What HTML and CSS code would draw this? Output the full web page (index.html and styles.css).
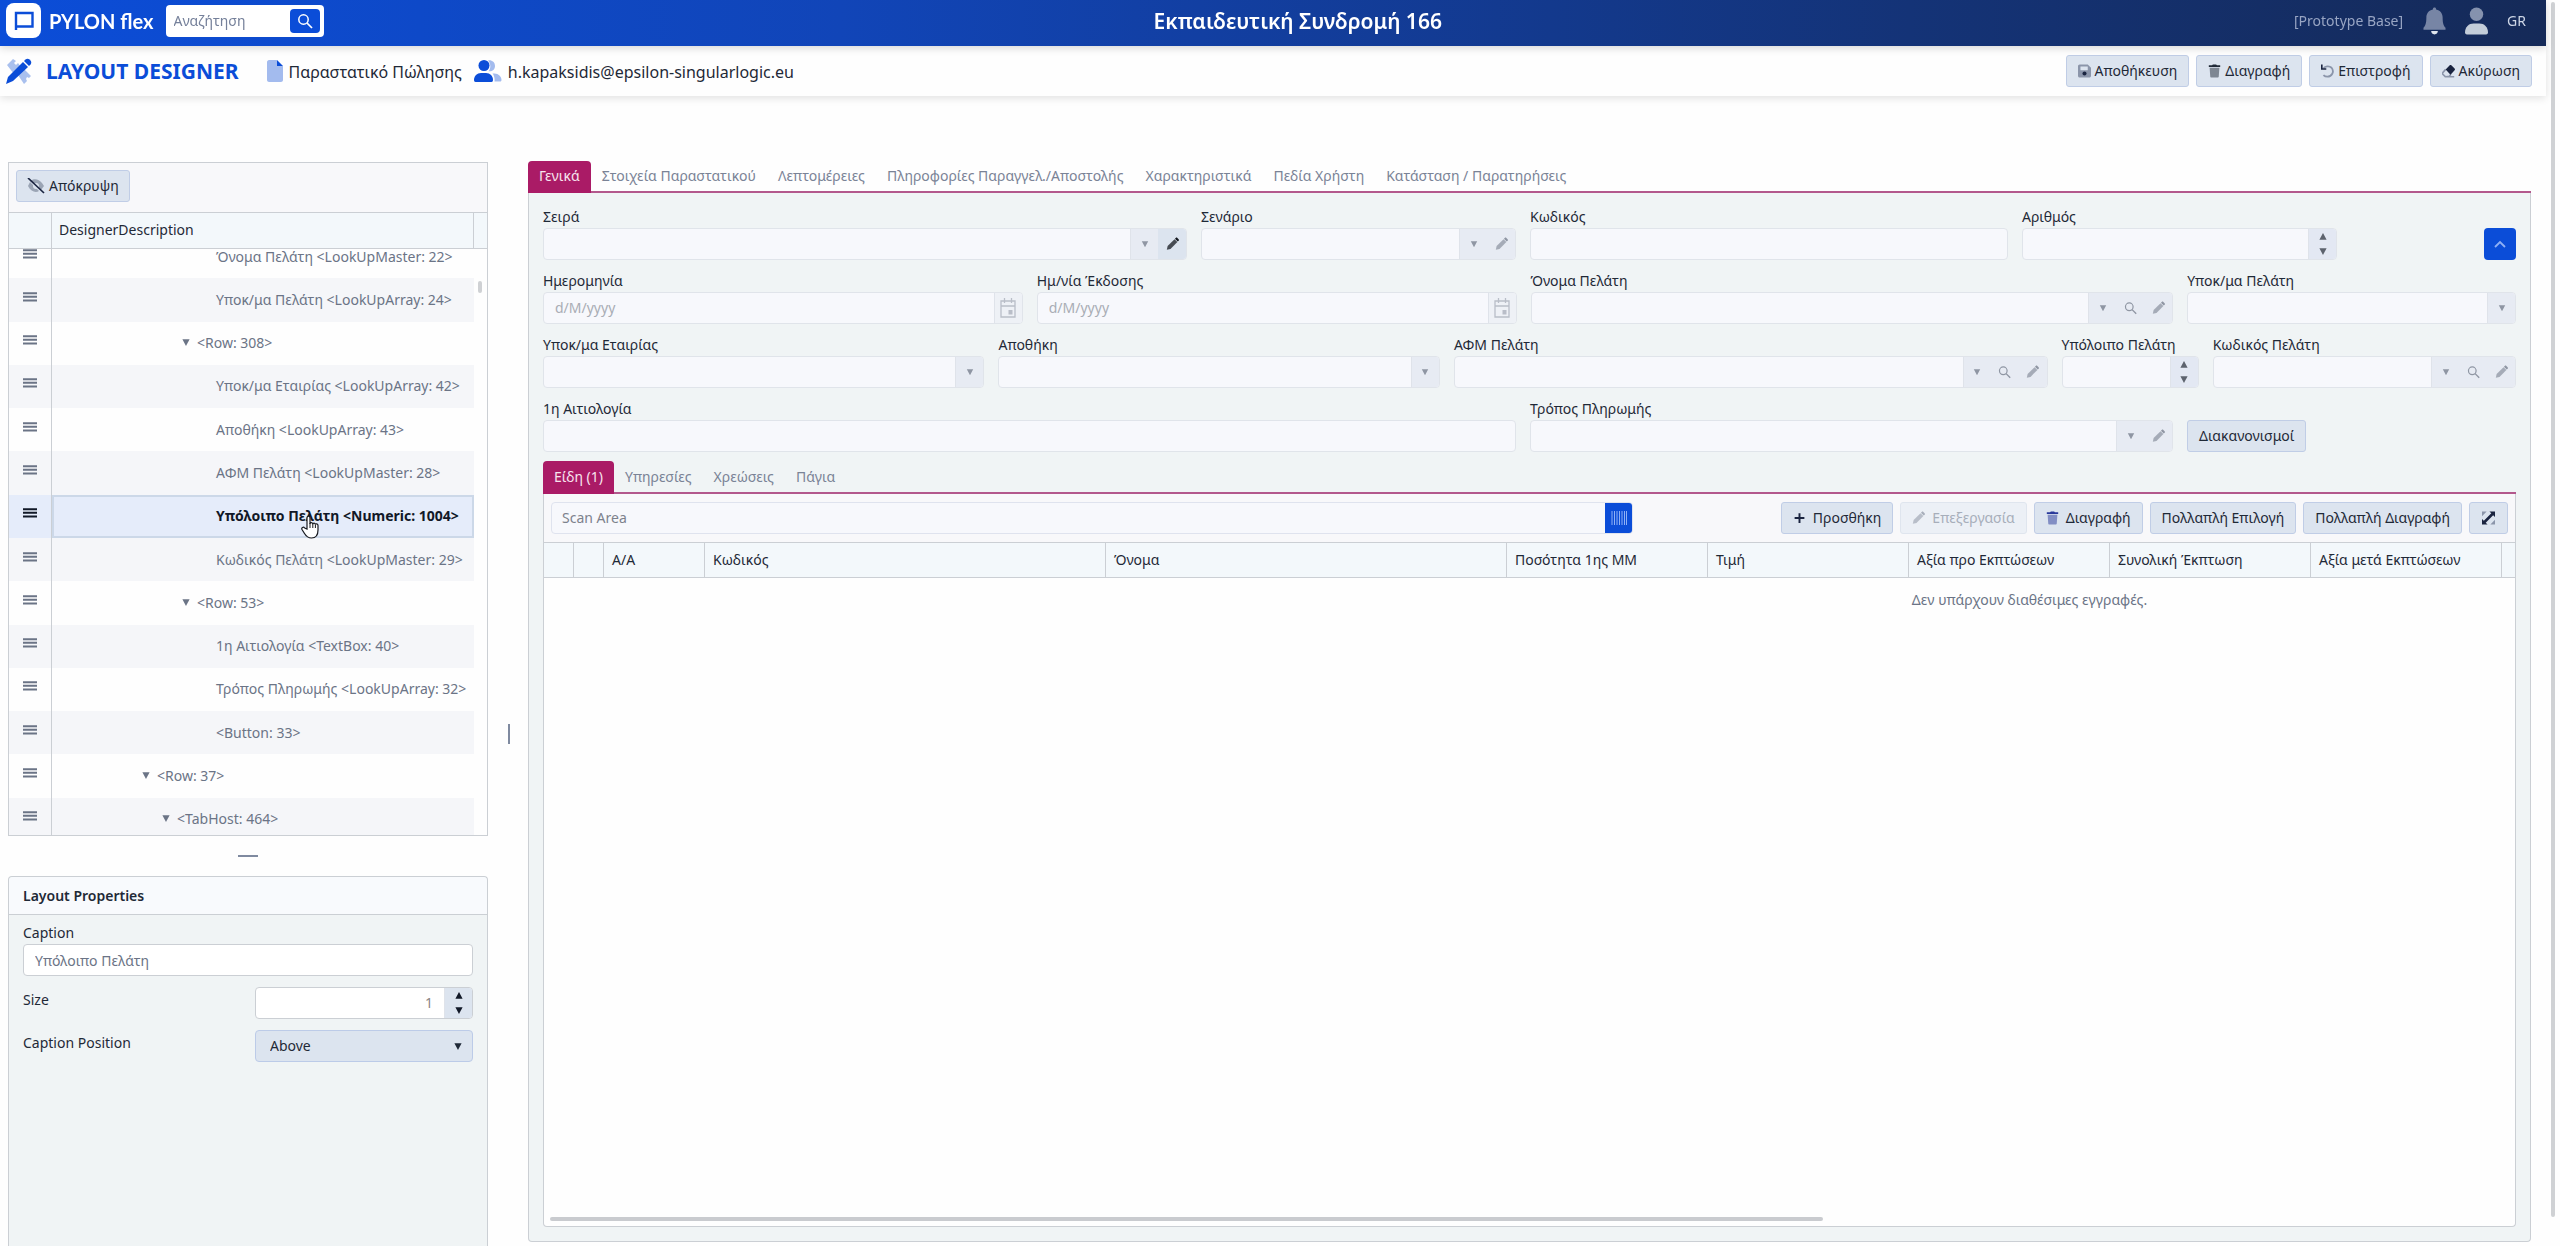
FILE: index.html
```html
<!DOCTYPE html>
<html lang="el">
<head>
    <meta charset="UTF-8">
    <meta name="viewport" content="width=device-width, initial-scale=1.0">
    <title>PYLON flex - Layout Designer</title>
    <link rel="stylesheet" href="styles.css">
</head>
<body>

    <svg class="sprite" aria-hidden="true">
        <symbol id="i-search" viewBox="0 0 16 16"><circle cx="6.5" cy="6.5" r="4.7" fill="none" stroke="currentColor" stroke-width="1.5"/><path d="M10 10l5 5" stroke="currentColor" stroke-width="1.7"/></symbol>
        <symbol id="i-pencil" viewBox="0 0 16 16"><path d="M1 15l1-4.5 8.5-8.5 3.500 3.500L5.500 14z" fill="currentColor" opacity=".75"/><path d="M11 1.500l1-1c.6-.6 1.400-.6 2 0l1.500 1.500c.6.6.6 1.400 0 2l-1 1z" fill="currentColor"/></symbol>
        <symbol id="i-down" viewBox="0 0 10 10"><path d="M1 1.500h8L5 9z" fill="currentColor"/></symbol>
        <symbol id="i-up" viewBox="0 0 10 10"><path d="M1 8.500h8L5 1z" fill="currentColor"/></symbol>
        <symbol id="i-calendar" viewBox="0 0 16 20"><path d="M1 3h14v16H1zM1 8h14M4.500 0v5M11.500 0v5" fill="none" stroke="currentColor" stroke-width="1.3"/><path d="M8.500 12h4v4.500h-4z" fill="currentColor"/></symbol>
        <symbol id="i-trash" viewBox="0 0 16 16"><path d="M1 1h4l1-1h4l1 1h4v2.200H1z" fill="currentColor"/><path d="M2 4h12l-.8 11c0 .6-.5 1-1 1H3.800c-.6 0-1-.4-1-1z" fill="currentColor" opacity=".5"/></symbol>
        <symbol id="i-menu" viewBox="0 0 14 10"><path d="M0 1.200h14M0 4.800h14M0 8.400h14" stroke="currentColor" stroke-width="2"/></symbol>
    </svg>

    <header class="topbar">
        <a class="brand" href="#" aria-label="PYLON flex">
            <svg class="brand-logo" viewBox="0 0 36 36"><rect width="35" height="35" rx="8" fill="#fff"/><path d="M10 27V10h16.500v13.500H10" fill="none" stroke="#0b4dd8" stroke-width="2.400"/></svg>
            <span>PYLON flex</span>
        </a>
        <div class="search">
            <input type="text" placeholder="Αναζήτηση" aria-label="Αναζήτηση">
            <button type="button" aria-label="Εύρεση"><svg><use href="#i-search"/></svg></button>
        </div>
        <h1>Εκπαιδευτική Συνδρομή 166</h1>
        <span class="base">[Prototype Base]</span>
        <svg class="bell" viewBox="0 0 24 28"><path d="M12 0c1 0 1.700.7 1.700 2 4.300.9 6.800 4 6.800 8.500 0 5.500.8 8 3 10.500v2H.5v-2c2.200-2.500 3-5 3-10.500C3.500 6 6 2.900 10.300 2c0-1.300.7-2 1.700-2z" fill="#7785a5"/><path d="M8.500 24.500h7c0 2-1.500 3.500-3.500 3.500s-3.500-1.500-3.500-3.500z" fill="#dfe5ee"/></svg>
        <svg class="avatar" viewBox="0 0 24 28"><circle cx="12" cy="7" r="7" fill="#8592ae"/><path d="M0 26c0-6 4-9.500 9-9.500h6c5 0 9 3.500 9 9.500 0 1-.8 2-2 2H2c-1.200 0-2-1-2-2z" fill="#c3cdd9"/></svg>
        <a class="lang" href="#">GR</a>
    </header>

    <div class="titlebar">
        <svg class="ico-design" viewBox="0 0 26 26"><path d="M1 7l6-6 3 2-2 2 2 2 2-2 3 4-7 7zM12 17l6-6 7 7-2 2-2-1-1 2 1 2-3 3z" fill="#a9c0ee"/><path d="M2 19L17 4l5 5L7 23l-7 3z" fill="#0b4dd8"/><path d="M18 3l1.500-1.500c1-1 3-1 4 0l1 1c1 1 1 3 0 4L23 8z" fill="#0b4dd8"/></svg>
        <h2>LAYOUT DESIGNER</h2>
        <svg class="ico-doc" viewBox="0 0 16 22"><path d="M2 0h8v6h6v14c0 1-1 2-2 2H2c-1 0-2-1-2-2V2C0 1 1 0 2 0z" fill="#a3bbee"/><path d="M10 0l6 6h-6z" fill="#0b4dd8"/></svg>
        <span class="crumb">Παραστατικό Πώλησης</span>
        <svg class="ico-users" viewBox="0 0 28 22"><path d="M14 .5c3.500-.8 7 1.500 7 5.500s-3.500 6-6.500 5.200c2.500-3 2.500-7.500-.5-10.700zM18.500 13.500h2c4 0 7 3 7 6.500 0 .8-.5 1.500-1.500 1.500h-5.500c.4-3-.3-6-2-8z" fill="#a3bbee"/><circle cx="10" cy="5.500" r="5.500" fill="#0b4dd8"/><path d="M0 20c0-4 3-7 7-7h5c4 0 7 3 7 7 0 1-.6 2-1.500 2h-16C.6 22 0 21 0 20z" fill="#0b4dd8"/></svg>
        <span class="crumb">h.kapaksidis@epsilon-singularlogic.eu</span>
        <div class="actions">
            <button type="button" class="btn"><svg viewBox="0 0 16 16"><path d="M2 0h10l4 4v10c0 1-1 2-2 2H2c-1 0-2-1-2-2V2C0 1 1 0 2 0zm1 2.500V7h9V2.500z" fill="#8b95aa" fill-rule="evenodd"/><circle cx="8" cy="11" r="2.500" fill="#1a2440"/></svg>Αποθήκευση</button>
            <button type="button" class="btn"><svg><use href="#i-trash"/></svg>Διαγραφή</button>
            <button type="button" class="btn"><svg viewBox="0 0 16 16"><path d="M3 5C5 2 10 1 13 4c4 5 0 11-5 11-2 0-4-1-5-2" fill="none" stroke="#8b95aa" stroke-width="2.200"/><path d="M0 0h2v4.500h4.500v2H0z" fill="#1a2440"/></svg>Επιστροφή</button>
            <button type="button" class="btn"><svg viewBox="0 0 16 16"><path d="M4.500 6L1 10c-.6.6-.6 1.400 0 2l3 3h11M4.500 15l4.500-.5 2-2.500" fill="none" stroke="#8b95aa" stroke-width="2"/><path d="M4.500 6L9.500 1c.6-.6 1.400-.6 2 0l4 4c.6.6.6 1.400 0 2l-5 5.500z" fill="#1a2440"/></svg>Ακύρωση</button>
        </div>
    </div>

    <main class="workspace">
        <aside class="side">
            <section class="tree">
                <div class="tree-toolbar">
                    <button type="button" class="btn"><svg viewBox="0 0 18 16"><path d="M3 3c4-3 9-2 12 2l2 3-3 4M1 8c3 6 8 7 11 5L3 4z" fill="#9ba5b5"/><circle cx="9" cy="8" r="3" fill="#dce4ef"/><path d="M1 0l16 15" stroke="#1a2440" stroke-width="1.700"/></svg>Απόκρυψη</button>
                </div>
                <div class="tree-head"><span></span><span>DesignerDescription</span><span></span></div>
                <div class="tree-body">
                    <table>
                        <tr><td><svg><use href="#i-menu"/></svg></td><td class="l4">Όνομα Πελάτη &lt;LookUpMaster: 22&gt;</td></tr>
                        <tr><td><svg><use href="#i-menu"/></svg></td><td class="l4">Υποκ/μα Πελάτη &lt;LookUpArray: 24&gt;</td></tr>
                        <tr><td><svg><use href="#i-menu"/></svg></td><td class="l3"><svg><use href="#i-down"/></svg>&lt;Row: 308&gt;</td></tr>
                        <tr><td><svg><use href="#i-menu"/></svg></td><td class="l4">Υποκ/μα Εταιρίας &lt;LookUpArray: 42&gt;</td></tr>
                        <tr><td><svg><use href="#i-menu"/></svg></td><td class="l4">Αποθήκη &lt;LookUpArray: 43&gt;</td></tr>
                        <tr><td><svg><use href="#i-menu"/></svg></td><td class="l4">ΑΦΜ Πελάτη &lt;LookUpMaster: 28&gt;</td></tr>
                        <tr class="selected"><td><svg><use href="#i-menu"/></svg></td><td class="l4">Υπόλοιπο Πελάτη &lt;Numeric: 1004&gt;<svg class="pointer" viewBox="0 0 18 24"><path d="M6 14V3c0-2.500 3-2.500 3 0v6c0-2 2.800-2 2.800.3 0-1.600 2.600-1.500 2.600.5 0-1.500 2.600-1.300 2.600.7V15c0 5-2 8-6.500 8-4 0-5.500-2-7-4.500L1 14.500c-1-2 1.500-3 2.700-1.500z" fill="#fff" stroke="#16181d" stroke-width="1.200"/><path d="M9 8v5M11.800 9v4M14.400 10v3" stroke="#16181d"/></svg></td></tr>
                        <tr><td><svg><use href="#i-menu"/></svg></td><td class="l4">Κωδικός Πελάτη &lt;LookUpMaster: 29&gt;</td></tr>
                        <tr><td><svg><use href="#i-menu"/></svg></td><td class="l3"><svg><use href="#i-down"/></svg>&lt;Row: 53&gt;</td></tr>
                        <tr><td><svg><use href="#i-menu"/></svg></td><td class="l4">1η Αιτιολογία &lt;TextBox: 40&gt;</td></tr>
                        <tr><td><svg><use href="#i-menu"/></svg></td><td class="l4">Τρόπος Πληρωμής &lt;LookUpArray: 32&gt;</td></tr>
                        <tr><td><svg><use href="#i-menu"/></svg></td><td class="l4">&lt;Button: 33&gt;</td></tr>
                        <tr><td><svg><use href="#i-menu"/></svg></td><td class="l1"><svg><use href="#i-down"/></svg>&lt;Row: 37&gt;</td></tr>
                        <tr><td><svg><use href="#i-menu"/></svg></td><td class="l2"><svg><use href="#i-down"/></svg>&lt;TabHost: 464&gt;</td></tr>
                    </table>
                    <div class="tree-scroll"></div>
                </div>
            </section>
            <div class="split-h"></div>
            <section class="props">
                <h3>Layout Properties</h3>
                <div class="props-body">
                    <div class="field">
                        <label for="caption">Caption</label>
                        <input class="box" id="caption" type="text" value="Υπόλοιπο Πελάτη">
                    </div>
                    <label for="size">Size</label>
                    <div class="control live">
                        <input id="size" type="number" value="1">
                        <div class="spin"><button type="button" aria-label="Αύξηση"><svg><use href="#i-up"/></svg></button><button type="button" aria-label="Μείωση"><svg><use href="#i-down"/></svg></button></div>
                    </div>
                    <label for="position">Caption Position</label>
                    <div class="select">
                        <select id="position"><option>Above</option><option>Left</option></select>
                        <svg><use href="#i-down"/></svg>
                    </div>
                </div>
            </section>
        </aside>

        <div class="split-v"></div>

        <section class="designer">
            <nav class="tabs">
                <button type="button" class="active">Γενικά</button>
                <button type="button">Στοιχεία Παραστατικού</button>
                <button type="button">Λεπτομέρειες</button>
                <button type="button">Πληροφορίες Παραγγελ./Αποστολής</button>
                <button type="button">Χαρακτηριστικά</button>
                <button type="button">Πεδία Χρήστη</button>
                <button type="button">Κατάσταση / Παρατηρήσεις</button>
            </nav>
            <div class="panel">
                <div class="form-row row-1">
                    <div class="field">
                        <label for="f1">Σειρά</label>
                        <div class="control"><input id="f1" type="text"><button type="button" aria-label="Λίστα"><svg class="tri"><use href="#i-down"/></svg></button><button type="button" class="on" aria-label="Επεξεργασία"><svg><use href="#i-pencil"/></svg></button></div>
                    </div>
                    <div class="field">
                        <label for="f2">Σενάριο</label>
                        <div class="control"><input id="f2" type="text"><button type="button" aria-label="Λίστα"><svg class="tri"><use href="#i-down"/></svg></button><button type="button" aria-label="Επεξεργασία"><svg><use href="#i-pencil"/></svg></button></div>
                    </div>
                    <div class="field">
                        <label for="f3">Κωδικός</label>
                        <div class="control"><input id="f3" type="text"></div>
                    </div>
                    <div class="field">
                        <label for="f4">Αριθμός</label>
                        <div class="control"><input id="f4" type="number"><div class="spin"><button type="button" aria-label="Αύξηση"><svg><use href="#i-up"/></svg></button><button type="button" aria-label="Μείωση"><svg><use href="#i-down"/></svg></button></div></div>
                    </div>
                    <button type="button" class="collapse" aria-label="Σύμπτυξη"><svg viewBox="0 0 12 8"><path d="M1 7l5-5 5 5" fill="none" stroke="#8fb0f5" stroke-width="1.800"/></svg></button>
                </div>
                <div class="form-row row-2">
                    <div class="field">
                        <label for="f5">Ημερομηνία</label>
                        <div class="control"><input id="f5" type="text" placeholder="d/M/yyyy"><button type="button" class="date" aria-label="Ημερολόγιο"><svg class="cal"><use href="#i-calendar"/></svg></button></div>
                    </div>
                    <div class="field">
                        <label for="f6">Ημ/νία Έκδοσης</label>
                        <div class="control"><input id="f6" type="text" placeholder="d/M/yyyy"><button type="button" class="date" aria-label="Ημερολόγιο"><svg class="cal"><use href="#i-calendar"/></svg></button></div>
                    </div>
                    <div class="field">
                        <label for="f7">Όνομα Πελάτη</label>
                        <div class="control"><input id="f7" type="text"><button type="button" aria-label="Λίστα"><svg class="tri"><use href="#i-down"/></svg></button><button type="button" aria-label="Εύρεση"><svg><use href="#i-search"/></svg></button><button type="button" aria-label="Επεξεργασία"><svg><use href="#i-pencil"/></svg></button></div>
                    </div>
                    <div class="field">
                        <label for="f8">Υποκ/μα Πελάτη</label>
                        <div class="control"><input id="f8" type="text"><button type="button" aria-label="Λίστα"><svg class="tri"><use href="#i-down"/></svg></button></div>
                    </div>
                </div>
                <div class="form-row row-3">
                    <div class="field">
                        <label for="f9">Υποκ/μα Εταιρίας</label>
                        <div class="control"><input id="f9" type="text"><button type="button" aria-label="Λίστα"><svg class="tri"><use href="#i-down"/></svg></button></div>
                    </div>
                    <div class="field">
                        <label for="f10">Αποθήκη</label>
                        <div class="control"><input id="f10" type="text"><button type="button" aria-label="Λίστα"><svg class="tri"><use href="#i-down"/></svg></button></div>
                    </div>
                    <div class="field">
                        <label for="f11">ΑΦΜ Πελάτη</label>
                        <div class="control"><input id="f11" type="text"><button type="button" aria-label="Λίστα"><svg class="tri"><use href="#i-down"/></svg></button><button type="button" aria-label="Εύρεση"><svg><use href="#i-search"/></svg></button><button type="button" aria-label="Επεξεργασία"><svg><use href="#i-pencil"/></svg></button></div>
                    </div>
                    <div class="field">
                        <label for="f12">Υπόλοιπο Πελάτη</label>
                        <div class="control"><input id="f12" type="number"><div class="spin"><button type="button" aria-label="Αύξηση"><svg><use href="#i-up"/></svg></button><button type="button" aria-label="Μείωση"><svg><use href="#i-down"/></svg></button></div></div>
                    </div>
                    <div class="field">
                        <label for="f13">Κωδικός Πελάτη</label>
                        <div class="control"><input id="f13" type="text"><button type="button" aria-label="Λίστα"><svg class="tri"><use href="#i-down"/></svg></button><button type="button" aria-label="Εύρεση"><svg><use href="#i-search"/></svg></button><button type="button" aria-label="Επεξεργασία"><svg><use href="#i-pencil"/></svg></button></div>
                    </div>
                </div>
                <div class="form-row row-4">
                    <div class="field">
                        <label for="f14">1η Αιτιολογία</label>
                        <div class="control"><input id="f14" type="text"></div>
                    </div>
                    <div class="field">
                        <label for="f15">Τρόπος Πληρωμής</label>
                        <div class="control"><input id="f15" type="text"><button type="button" aria-label="Λίστα"><svg class="tri"><use href="#i-down"/></svg></button><button type="button" aria-label="Επεξεργασία"><svg><use href="#i-pencil"/></svg></button></div>
                    </div>
                    <button type="button" class="btn">Διακανονισμοί</button>
                </div>

                <nav class="tabs inner">
                    <button type="button" class="active">Είδη (1)</button>
                    <button type="button">Υπηρεσίες</button>
                    <button type="button">Χρεώσεις</button>
                    <button type="button">Πάγια</button>
                </nav>
                <div class="grid">
                    <div class="grid-toolbar">
                        <div class="scan">
                            <input type="text" placeholder="Scan Area" aria-label="Scan Area">
                            <button type="button" aria-label="Σάρωση"><svg viewBox="0 0 16 14"><path d="M1 0v14M3.500 0v14M6 0v14M8.500 0v14M11 0v14M13.500 0v14M15.500 0v14" stroke="#8fb0f5"/></svg></button>
                        </div>
                        <button type="button" class="btn"><svg viewBox="0 0 16 16"><path d="M8 2v12M2 8h12" stroke="#1a2440" stroke-width="2.400"/></svg>Προσθήκη</button>
                        <button type="button" class="btn" disabled><svg><use href="#i-pencil"/></svg>Επεξεργασία</button>
                        <button type="button" class="btn bin"><svg><use href="#i-trash"/></svg><span>Διαγραφή</span></button>
                        <button type="button" class="btn">Πολλαπλή Επιλογή</button>
                        <button type="button" class="btn">Πολλαπλή Διαγραφή</button>
                        <button type="button" class="btn" aria-label="Πλήρης οθόνη"><svg viewBox="0 0 14 14"><path d="M0 0h5L0 5zM14 14H9l5-5z" fill="#8b95aa"/><path d="M8 0h6v6l-2-2-8 8 2 2H0V8l2 2 8-8z" fill="#1a2440"/></svg></button>
                    </div>
                    <div class="grid-head">
                        <div class="grid-clip">
                            <table>
                                <colgroup><col class="c-xs"><col class="c-xs"><col class="c-sm"><col class="c-lg"><col class="c-lg"><col class="c-md"><col class="c-md"><col class="c-md"><col class="c-md"><col class="c-md"><col></colgroup>
                                <tr><th></th><th></th><th>Α/Α</th><th>Κωδικός</th><th>Όνομα</th><th>Ποσότητα 1ης ΜΜ</th><th>Τιμή</th><th>Αξία προ Εκπτώσεων</th><th>Συνολική Έκπτωση</th><th>Αξία μετά Εκπτώσεων</th><th></th></tr>
                            </table>
                        </div>
                    </div>
                    <div class="grid-body">
                        <p class="no-records">Δεν υπάρχουν διαθέσιμες εγγραφές.</p>
                    </div>
                    <div class="grid-scroll"><div></div></div>
                </div>
            </div>
        </section>
    </main>

    <div class="page-scroll"></div>

</body>
</html>
```
FILE: styles.css
```css
* {
    box-sizing: border-box;
}

body {
    margin: 0;
    height: 100vh;
    display: flex;
    flex-direction: column;
    overflow: hidden;
    background: #fefefe;
    color: #1f2937;
    font: 14px/20px "Noto Sans", sans-serif;
}

input, button, select {
    font: inherit;
    color: inherit;
    margin: 0;
}

button {
    border: none;
    padding: 0;
    cursor: pointer;
}

a {
    color: inherit;
    text-decoration: none;
}

h1, h2, h3, p {
    margin: 0;
}

svg {
    display: block;
    flex: none;
}

.sprite {
    position: absolute;
    width: 0;
    height: 0;
}

input[type=number] {
    appearance: textfield;
    text-align: right;
}

input[type=number]::-webkit-inner-spin-button {
    appearance: none;
}

/* top bar */

.topbar {
    flex: none;
    height: 46px;
    margin-right: 14px;
    padding: 0 20px 4px 6px;
    display: flex;
    align-items: center;
    color: #fff;
    background: linear-gradient(90deg, #0b4dd8 0%, #1145b8 33%, #143377 75%, #152a58 100%);
    position: relative;
    z-index: 2;
    box-shadow: 0 2px 8px rgba(0, 0, 0, 0.16);
}

.brand {
    display: flex;
    align-items: center;
    gap: 7px;
    margin-right: 12px;
    font: 700 20px/24px "Lato", sans-serif;
}

.brand-logo {
    width: 36px;
    height: 36px;
}

.search {
    width: 158px;
    height: 32px;
    padding: 4px;
    display: flex;
    background: #fff;
    border-radius: 4px;
}

.search input {
    flex: 1;
    min-width: 0;
    padding: 0 4px;
    border: none;
    background: none;
}

.search input::placeholder {
    color: #75809a;
}

.search button {
    width: 30px;
    display: grid;
    place-items: center;
    border-radius: 4px;
    background: #0b4dd8;
    color: #fff;
}

.search svg {
    width: 16px;
    height: 16px;
}

.topbar h1 {
    flex: 1;
    margin-right: 22px;
    text-align: center;
    font-size: 21px;
    font-weight: 600;
    line-height: 24px;
}

.base {
    color: #98a5c3;
}

.bell {
    width: 23px;
    height: 28px;
    margin-left: 20px;
}

.avatar {
    width: 23px;
    height: 28px;
    margin: 0 19px;
}

.lang {
    color: #cdd6e6;
}

/* title bar */

.titlebar {
    flex: none;
    height: 50px;
    margin-right: 14px;
    padding: 0 14px 0 6px;
    display: flex;
    align-items: center;
    background: #fefefe;
    box-shadow: 0 2px 8px rgba(0, 0, 0, 0.12);
}

.ico-design {
    width: 26px;
    height: 26px;
}

.titlebar h2 {
    margin: 0 28px 0 14px;
    color: #0b4dd8;
    font-size: 21px;
    font-weight: 700;
    line-height: 24px;
}

.ico-doc {
    width: 16px;
    height: 22px;
}

.ico-users {
    width: 28px;
    height: 22px;
}

.crumb {
    margin: 2px 12px 0 6px;
    font-size: 16px;
}

.actions {
    margin-left: auto;
    display: flex;
    gap: 7px;
}

.btn {
    height: 32px;
    padding: 0 11px;
    display: flex;
    align-items: center;
    gap: 4px;
    border: 1px solid #c0cde6;
    border-radius: 3px;
    background: #dce4ef;
    color: #1f2937;
    white-space: nowrap;
}

.btn svg {
    width: 13px;
    height: 14px;
}

.btn:disabled {
    background: #ecf0f6;
    border-color: #dfe5ee;
    color: #a7aeba;
}

/* workspace */

.workspace {
    flex: 1;
    min-height: 0;
    display: flex;
    padding: 65px 29px 0 8px;
}

.side {
    width: 480px;
    padding-top: 1px;
    display: flex;
    flex-direction: column;
}

.tree {
    flex: none;
    border: 1px solid #cbcfd4;
}

.tree-toolbar {
    padding: 7px;
    height: 49px;
    display: flex;
    background: #f8f8fa;
}

.tree-toolbar .btn {
    padding: 0 10px;
}

.tree-toolbar .btn svg {
    width: 18px;
    height: 16px;
}

.tree-head {
    display: grid;
    grid-template-columns: 43px 1fr 13px;
    height: 37px;
    border: solid #cbcfd4;
    border-width: 1px 0;
    background: #f3f8fb;
}

.tree-head span {
    padding: 7px;
    border-right: 1px solid #cbcfd4;
}

.tree-head span:last-child {
    border: none;
}

.tree-body {
    display: flex;
    height: 586px;
    overflow: hidden;
}

.tree-body table {
    flex: 1;
    height: 606px;
    margin-top: -14px;
    border-collapse: separate;
    border-spacing: 0;
    table-layout: fixed;
    color: #6b7486;
}

.tree-body td {
    padding: 0;
    white-space: nowrap;
}

.tree-body td:first-child {
    width: 43px;
    padding: 0 0 6px 14px;
    border-right: 1px solid #cbcfd4;
}

.tree-body td:first-child svg {
    width: 14px;
    height: 10px;
}

.tree-body tr:nth-child(even) td {
    background: #f5f6f9;
}

.tree-body td:last-child svg {
    display: inline-block;
    width: 10px;
    height: 9px;
    margin-right: 6px;
    vertical-align: 1px;
}

.tree-body .l1 { padding-left: 89px; }
.tree-body .l2 { padding-left: 109px; }
.tree-body .l3 { padding-left: 129px; }
.tree-body .l4 { padding-left: 164px; }

.tree-body .selected td {
    background: #e5ecfa;
    color: #111827;
    font-weight: 700;
}

.tree-body .selected td:last-child {
    position: relative;
    box-shadow: inset 0 0 0 2px #ccd8e8;
}

.tree-body td:last-child .pointer {
    position: absolute;
    left: 249px;
    top: 20px;
    width: 18px;
    height: 24px;
    margin: 0;
    z-index: 1;
}

.tree-scroll {
    width: 4px;
    height: 12px;
    margin: 32px 5px 0 4px;
    border-radius: 2px;
    background: #cfd1d4;
}

.split-h {
    flex: none;
    width: 20px;
    height: 2px;
    margin: 19px auto;
    background: #7f8aa0;
}

.split-v {
    width: 2px;
    height: 20px;
    margin: 563px 18px 0 20px;
    background: #7f8aa0;
}

.props {
    flex: 1;
    border: 1px solid #cbcfd4;
    border-bottom: none;
    border-radius: 4px 4px 0 0;
    background: #f0f4f5;
}

.props h3 {
    padding: 9px 14px 8px;
    border-bottom: 1px solid #cbcfd4;
    border-radius: 4px 4px 0 0;
    background: #f8fafd;
    font-size: 14px;
    font-weight: 600;
    line-height: 20px;
}

.props-body {
    padding: 8px 14px;
    display: grid;
    grid-template-columns: 232px 1fr;
    row-gap: 11px;
}

.props-body .field {
    grid-column: span 2;
}

.props-body > label {
    padding-top: 3px;
}

.box {
    display: block;
    width: 100%;
    height: 32px;
    padding: 0 11px;
    border: 1px solid #cbcfd4;
    border-radius: 4px;
    background: #fff;
    color: #6b7486;
}

.select {
    display: grid;
    align-items: center;
}

.select select, .select svg {
    grid-area: 1 / 1;
}

.select select {
    appearance: none;
    height: 32px;
    padding: 0 14px;
    border: 1px solid #bccbe8;
    border-radius: 4px;
    background: #dce4ef;
}

.select svg {
    justify-self: end;
    width: 10px;
    height: 9px;
    margin-right: 10px;
    pointer-events: none;
}

/* form */

.designer {
    flex: 1;
    min-width: 0;
    display: flex;
    flex-direction: column;
    padding-bottom: 4px;
}

.tabs {
    flex: none;
    display: flex;
    border-bottom: 2px solid #b3588c;
}

.tabs button {
    height: 30px;
    padding: 0 11px;
    background: none;
    color: #7a8396;
}

.tabs .active {
    border-radius: 4px 4px 0 0;
    background: #aa1b66;
    box-shadow: 0 2px 0 #aa1b66;
    color: #f7e4ee;
}

.tabs.inner button {
    height: 31px;
}

.panel {
    flex: 1;
    min-height: 0;
    padding: 14px;
    display: flex;
    flex-direction: column;
    border: 1px solid #cbcfd4;
    border-top: none;
    border-radius: 0 0 4px 4px;
    background: #f0f4f5;
}

.form-row {
    flex: none;
    display: grid;
    column-gap: 14px;
    align-items: end;
    margin-bottom: 11px;
}

.row-1 { grid-template-columns: 644fr 315fr 478fr 315fr 119fr 32px; }
.row-2 { grid-template-columns: 480fr 480fr 643fr 329fr; }
.row-3 { grid-template-columns: 441fr 441fr 593fr 137fr 303fr; }
.row-4 { grid-template-columns: 973fr 643fr 329fr; }

.row-4 .btn {
    justify-self: start;
}

.row-4 {
    margin-bottom: 9px;
}

.field {
    min-width: 0;
}

.field label {
    display: block;
    height: 21px;
    white-space: nowrap;
}

.control {
    display: flex;
    height: 32px;
    overflow: hidden;
    border: 1px solid #e0e4ea;
    border-radius: 4px;
    background: #f7f8fc;
}

.control input {
    flex: 1;
    min-width: 0;
    padding: 0 11px;
    border: none;
    background: none;
}

.control input::placeholder {
    color: #a9adb5;
}

.control > button {
    width: 28px;
    display: grid;
    place-items: center;
    background: #e7ebf3;
    color: #8f96a3;
}

.control > input + button, .spin {
    border-left: 1px solid #dfe3ea;
}

.control > button.on {
    background: #dce4ef;
    color: #14181f;
}

.control > button.date {
    background: #eef1f6;
    color: #b9bec8;
}

.control > button svg {
    width: 13px;
    height: 16px;
}

.control > button .tri {
    width: 10px;
    height: 8px;
}

.control > button .cal {
    width: 16px;
    height: 20px;
}

.spin {
    width: 28px;
    display: grid;
    grid-template-rows: 1fr 1fr;
    background: #e3e8f3;
    color: #5d636e;
}

.spin button {
    display: grid;
    place-items: center;
    background: none;
}

.spin svg {
    width: 10px;
    height: 9px;
}

.control.live {
    border-color: #cbcfd4;
    background: #fff;
}

.live input {
    color: #8b8584;
}

.live .spin {
    background: #dce4ef;
    color: #111827;
}

.collapse {
    grid-column: 6;
    height: 32px;
    display: grid;
    place-items: center;
    border-radius: 4px;
    background: #0b4dd8;
}

.collapse svg {
    width: 12px;
    height: 8px;
}

/* grid */

.grid {
    flex: 1;
    min-height: 0;
    display: flex;
    flex-direction: column;
    overflow: hidden;
    border: 1px solid #cbcfd4;
    border-top: none;
    border-radius: 0 0 4px 4px;
    background: #fefefe;
}

.grid-toolbar {
    padding: 8px 7px;
    display: flex;
    gap: 7px;
    background: #f8f8fa;
}

.grid-toolbar .btn {
    gap: 7px;
}

.grid-toolbar .btn:last-child {
    padding: 0 12px;
}

.grid-toolbar .bin svg {
    color: #28389a;
}

.scan {
    flex: 0 1 1082px;
    height: 32px;
    margin-right: auto;
    display: flex;
    overflow: hidden;
    border: 1px solid #dfe3ee;
    border-radius: 4px;
    background: #f7f8fc;
}

.scan input {
    flex: 1;
    padding: 0 10px;
    border: none;
    background: none;
}

.scan input::placeholder {
    color: #7d828c;
}

.scan button {
    width: 27px;
    display: grid;
    place-items: center;
    background: #0b4dd8;
}

.scan svg {
    width: 16px;
    height: 14px;
}

.grid-head {
    flex: none;
    padding-right: 13px;
    border: solid #cbcfd4;
    border-width: 1px 0;
    background: #f3f8fb;
}

.grid-clip {
    overflow: hidden;
    border-right: 1px solid #cbcfd4;
}

.grid-head table {
    width: 2971px;
    table-layout: fixed;
    border-collapse: separate;
    border-spacing: 0;
}

.grid-head th {
    height: 34px;
    padding: 0 8px;
    border-right: 1px solid #cbcfd4;
    text-align: left;
    font-weight: 400;
}

.c-xs { width: 30px; }
.c-sm { width: 101px; }
.c-md { width: 201px; }
.c-lg { width: 401px; }

.grid-body {
    flex: 1;
    overflow: hidden;
}

.no-records {
    width: 2971px;
    padding: 12px 0;
    text-align: center;
    color: #6b7486;
}

.grid-scroll {
    padding: 0 6px 5px;
}

.grid-scroll div {
    width: 65%;
    height: 4px;
    border-radius: 2px;
    background: #c9cbcf;
}

.page-scroll {
    position: fixed;
    top: 2px;
    right: 5px;
    bottom: 29px;
    width: 4px;
    border-radius: 2px;
    background: #cfd1d4;
}
```
